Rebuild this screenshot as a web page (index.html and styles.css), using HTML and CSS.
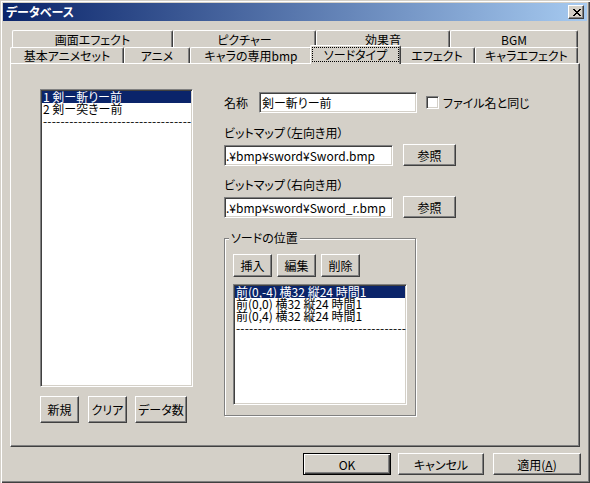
FILE: index.html
```html
<!DOCTYPE html>
<html lang="ja">
<head>
<meta charset="utf-8">
<title>データベース</title>
<link rel="stylesheet" href="styles.css">
</head>
<body>
<div class="window">
  <div class="titlebar">
    <span class="title">データベース</span>
    <span class="close">
      <svg width="8" height="7" viewBox="0 0 8 7" shape-rendering="crispEdges"><path d="M0 0h2v1H0zM6 0h2v1H6zM1 1h2v1H1zM5 1h2v1H5zM2 2h4v1H2zM3 3h2v1H3zM2 4h4v1H2zM1 5h2v1H1zM5 5h2v1H5zM0 6h2v1H0zM6 6h2v1H6z" fill="#000"/></svg>
    </span>
  </div>
  <div class="content">
    <div class="tabstrip">
      <div class="tabrow back">
        <div class="tab t-gamen">画面エフェクト</div>
        <div class="tab t-pic">ピクチャー</div>
        <div class="tab t-se">効果音</div>
        <div class="tab t-bgm">BGM</div>
      </div>
      <div class="tabrow front">
        <div class="tab t-kihon">基本アニメセット</div>
        <div class="tab t-anime">アニメ</div>
        <div class="tab t-chara">キャラの専用bmp</div>
        <div class="tab selected t-sword"><span class="focus">ソードタイプ</span></div>
        <div class="tab t-effect">エフェクト</div>
        <div class="tab t-ceffect">キャラエフェクト</div>
      </div>
    </div>
    <div class="panel">
      <div class="leftcol">
        <div class="listbox list-main">
          <div class="item sel">1 剣ー斬りー前</div>
          <div class="item">2 剣ー突きー前</div>
          <div class="item dash">----------------------------------</div>
        </div>
        <div class="btnrow">
          <div class="btn b-small">新規</div>
          <div class="btn b-small b-clear">クリア</div>
          <div class="btn b-count">データ数</div>
        </div>
      </div>
      <div class="rightcol">
        <div class="row-name">
          <span class="lbl-name">名称</span>
          <div class="field f-name">剣ー斬りー前</div>
          <span class="chk"></span>
          <span class="chk-label">ファイル名と同じ</span>
        </div>
        <div class="lbl">ビットマップ（左向き用）</div>
        <div class="row-file">
          <div class="field f-file">.¥bmp¥sword¥Sword.bmp</div>
          <div class="btn b-ref">参照</div>
        </div>
        <div class="lbl lbl2">ビットマップ（右向き用）</div>
        <div class="row-file">
          <div class="field f-file">.¥bmp¥sword¥Sword_r.bmp</div>
          <div class="btn b-ref">参照</div>
        </div>
        <div class="group">
          <span class="legend">ソードの位置</span>
          <div class="gbtnrow">
            <div class="btn gbtn">挿入</div>
            <div class="btn gbtn">編集</div>
            <div class="btn gbtn">削除</div>
          </div>
          <div class="listbox list-pos">
            <div class="item sel">前(0,-4) 横32 縦24 時間1</div>
            <div class="item">前(0,0) 横32 縦24 時間1</div>
            <div class="item">前(0,4) 横32 縦24 時間1</div>
            <div class="item dash">---------------------------------------</div>
          </div>
        </div>
      </div>
    </div>
  </div>
  <div class="footer">
    <div class="btn fbtn default">OK</div>
    <div class="btn fbtn f-cancel">キャンセル</div>
    <div class="btn fbtn f-apply">適用(<u>A</u>)</div>
  </div>
</div>
</body>
</html>
```

FILE: styles.css
```css
* { box-sizing: border-box; }
html, body { margin: 0; padding: 0; }
body {
  width: 590px;
  height: 483px;
  overflow: hidden;
  background: #D4D0C8;
  font-family: "Noto Sans CJK JP", "Noto Sans", sans-serif;
  font-size: 12px;
  font-feature-settings: "palt" 1;
  color: #000;
}
.window {
  width: 590px;
  height: 483px;
  padding: 3px;
  background: #D4D0C8;
  box-shadow: inset 1px 1px #D4D0C8, inset 2px 2px #fff, inset -1px -1px #404040, inset -2px -2px #808080;
}
.titlebar {
  height: 18px;
  background: linear-gradient(to right, #0A246A, #A6CAF0);
  display: flex;
  align-items: center;
  justify-content: space-between;
  padding: 0 3px 0 3px;
}
.title {
  color: #fff;
  font-weight: bold;
  font-size: 12px;
  line-height: 18px;
}
.close {
  width: 16px;
  height: 14px;
  background: #D4D0C8;
  border: 1px solid;
  border-color: #fff #404040 #404040 #fff;
  box-shadow: inset -1px -1px #808080;
  display: flex;
  align-items: center;
  justify-content: center;
  padding-left: 1px;
}
.close svg { display: block; }

.content { padding: 9px 7px 0 7px; }

.tabrow { display: flex; }
.tabrow.back { height: 17px; margin-left: 2px; }
.tabrow.front { height: 16px; align-items: flex-end; }
.tab {
  height: 100%;
  border-top: 1px solid #fff;
  border-left: 1px solid #fff;
  border-right: 1px solid #404040;
  box-shadow: inset -1px 0 #808080;
  border-radius: 2px 2px 0 0;
  text-align: center;
  white-space: nowrap;
  background: #D4D0C8;
}
.back .tab { padding-top: 1px; line-height: 15px; }
.front .tab { line-height: 15px; }
.t-gamen { width: 161px; }
.t-pic { width: 143px; }
.t-se { width: 134px; }
.t-bgm { width: 128px; }
.t-kihon { width: 114px; }
.t-anime { width: 66px; }
.t-chara { width: 122px; }
.t-sword { width: 91px; }
.t-effect { width: 76px; }
.t-ceffect { width: 103px; }
.tab.selected {
  height: 19px;
  margin: 0 -2px -1px -2px;
  position: relative;
  z-index: 1;
}
.focus {
  display: block;
  margin: 1px 1px 0 1px;
  height: 15px;
  line-height: 13px;
  border: 1px dotted #000;
}

.panel {
  height: 384px;
  border: 1px solid;
  border-color: #fff #404040 #404040 #fff;
  box-shadow: inset -1px -1px #808080;
  display: flex;
  align-items: flex-start;
  padding: 25px 0 0 29px;
}
.leftcol { width: 153px; }

.listbox {
  background: #fff;
  border: 1px solid;
  border-color: #808080 #fff #fff #808080;
  box-shadow: inset 1px 1px #404040, inset -1px -1px #D4D0C8;
  padding: 1px;
}
.list-main { height: 298px; }
.item {
  height: 12px;
  line-height: 12px;
  font-size: 12px;
  padding-left: 1px;
  white-space: nowrap;
}
.item.sel { background: #0A246A; color: #fff; }
.item.dash { letter-spacing: 0.2px; }

.btn {
  background: #D4D0C8;
  border: 1px solid;
  border-color: #fff #404040 #404040 #fff;
  box-shadow: inset -1px -1px #808080;
  display: flex;
  align-items: center;
  justify-content: center;
  white-space: nowrap;
}
.btnrow { display: flex; margin-top: 9px; }
.b-small { width: 39px; height: 27px; }
.b-clear { margin-left: 9px; }
.b-count { width: 52px; height: 27px; margin-left: 8px; }

.rightcol { margin-left: 31px; margin-top: 3px; }
.row-name { display: flex; align-items: center; height: 21px; }
.lbl-name { width: 35px; }
.field {
  background: #fff;
  border: 1px solid;
  border-color: #808080 #fff #fff #808080;
  box-shadow: inset 1px 1px #404040, inset -1px -1px #D4D0C8;
  height: 21px;
  line-height: 19px;
  padding-left: 2px;
  white-space: nowrap;
}
.f-name { width: 158px; }
.chk {
  width: 13px;
  height: 13px;
  margin-left: 9px;
  background: #fff;
  border: 1px solid;
  border-color: #808080 #fff #fff #808080;
  box-shadow: inset 1px 1px #404040, inset -1px -1px #D4D0C8;
}
.chk-label { margin-left: 4px; }

.lbl { margin-top: 11px; line-height: 17px; }
.lbl2 { margin-top: 10px; }
.row-file { display: flex; align-items: center; height: 22px; margin-top: 3px; }
.f-file { width: 169px; padding-left: 1px; }
.b-ref { width: 53px; height: 22px; margin-left: 10px; }

.group {
  position: relative;
  margin-top: 20px;
  width: 192px;
  height: 178px;
  border: 1px solid #808080;
  box-shadow: inset 1px 1px #fff, 1px 1px #fff;
  padding: 15px 0 0 8px;
}
.legend {
  position: absolute;
  top: -9px;
  left: 4px;
  padding: 0 2px;
  line-height: 16px;
  background: #D4D0C8;
}
.gbtnrow { display: flex; gap: 5px; }
.gbtn { width: 39px; height: 23px; }
.list-pos { margin-top: 7px; width: 174px; height: 121px; }

.footer {
  display: flex;
  justify-content: flex-end;
  padding: 6px 6px 0 0;
}
.fbtn { width: 88px; height: 22px; }
.fbtn.default {
  border: 1px solid #000;
  box-shadow: inset 1px 1px #fff, inset -1px -1px #404040, inset -2px -2px #808080;
}
.f-cancel { width: 86px; margin-left: 7px; }
.f-apply { margin-left: 9px; }
.f-apply u { text-decoration: underline; text-underline-offset: 1px; }
```
